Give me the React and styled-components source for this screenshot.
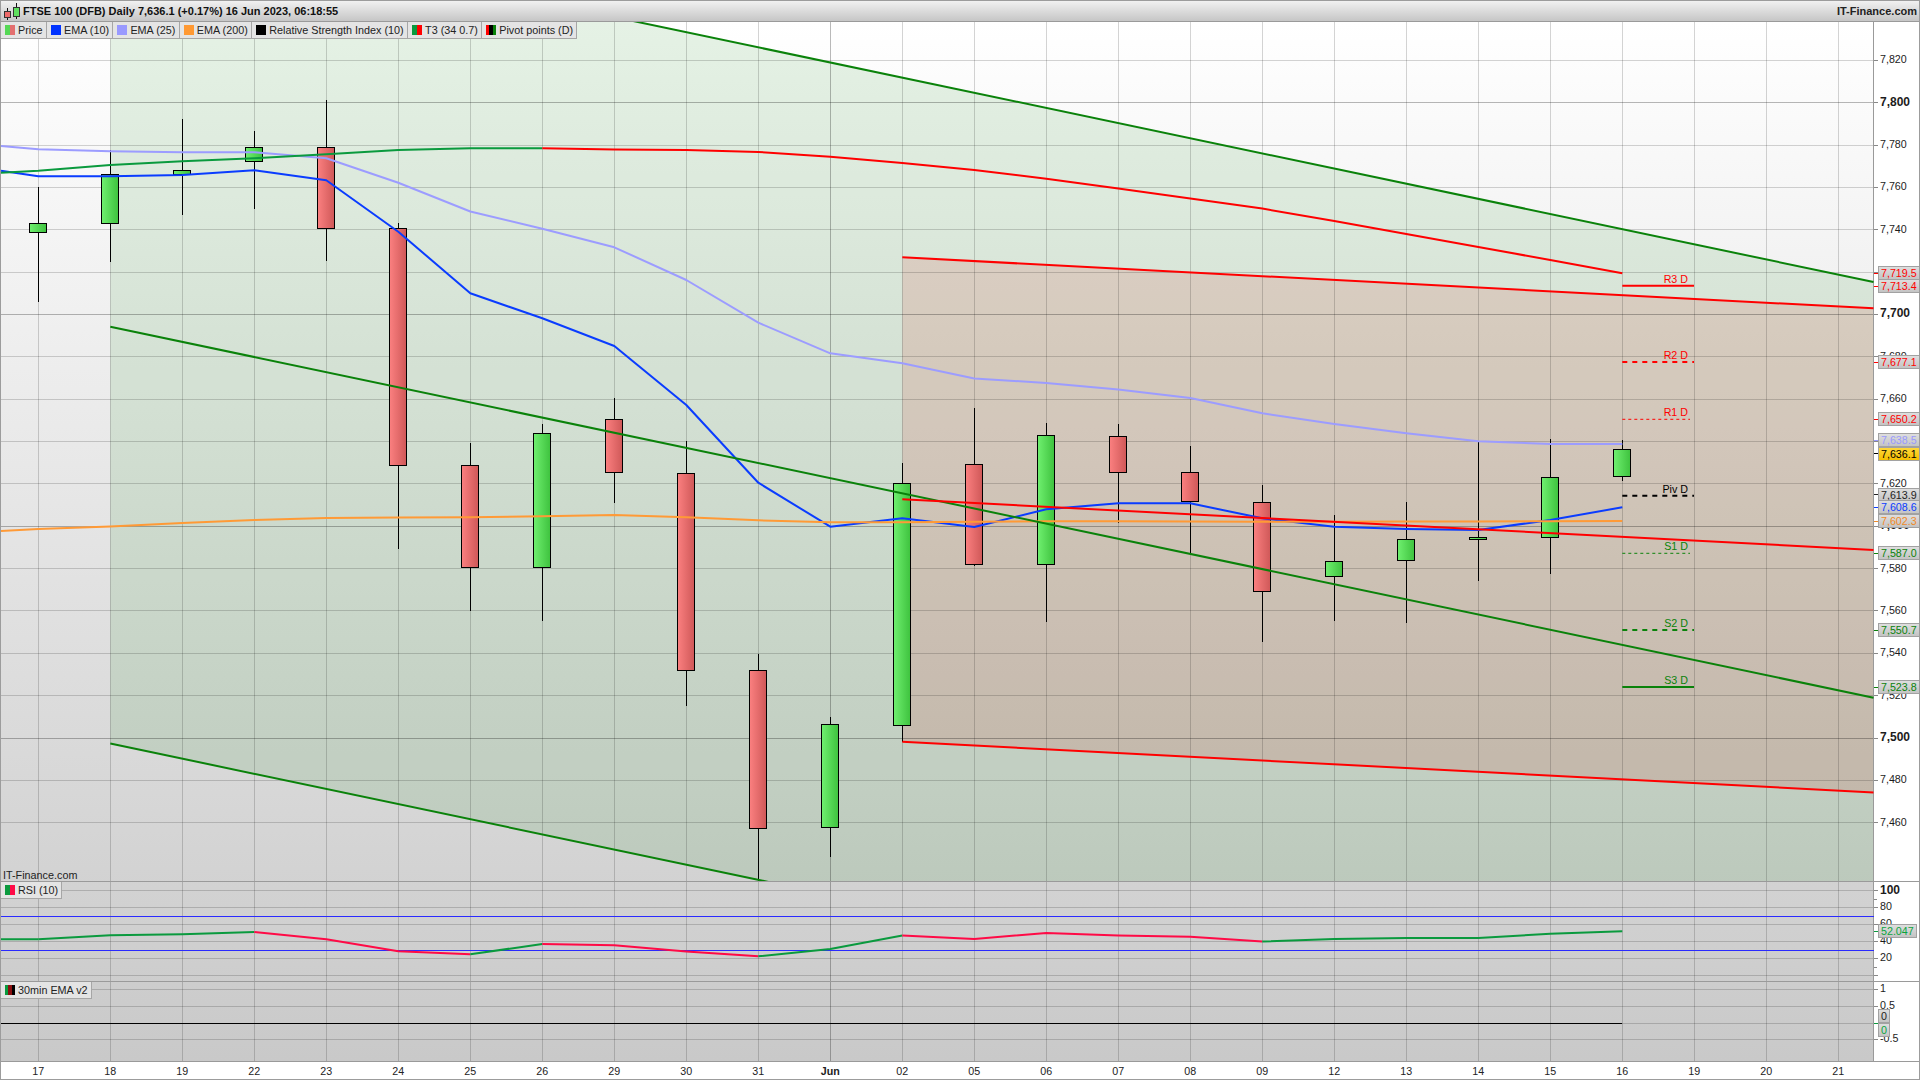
import React from 'react';
import styled, { createGlobalStyle } from 'styled-components';

const FONT = `'Liberation Sans', Arial, sans-serif`;
const PLOT_RIGHT = 1873.5;
const RIGHT_OF_DATA = 1622.3;

const GlobalStyle = createGlobalStyle`
  html, body {
    margin: 0;
    padding: 0;
    background: #fff;
    overflow: hidden;
  }
`;

const Frame = styled.div`
  position: relative;
  width: 1920px;
  height: 1080px;
  font-family: ${FONT};
  background: #fff;
  overflow: hidden;

  &::after {
    content: '';
    position: absolute;
    inset: 0;
    border: 1px solid #9c9c9c;
    pointer-events: none;
  }
`;

const TopBar = styled.header`
  height: 22px;
  box-sizing: border-box;
  border-bottom: 1px solid #9a9a9a;
  background: linear-gradient(#f3f3f3, #c6c6c6);
  display: flex;
  align-items: center;
  justify-content: space-between;
  padding: 1px 3px 0 3px;
`;

const Title = styled.div`
  display: flex;
  align-items: center;
  gap: 2px;
  font-size: 11px;
  font-weight: bold;
  color: #111;
`;

const Brand = styled.div`
  font-size: 11px;
  font-weight: bold;
  color: #222;
`;

const Stack = styled.main`
  position: relative;
  background: linear-gradient(#fff, #c9c9c9) 0 0 / 1873px 1039px no-repeat;
`;

const Legend = styled.div`
  position: absolute;
  top: 0;
  left: 1px;
  z-index: 3;
  display: flex;
  height: 17px;
  box-sizing: border-box;
  background: #e4e4e4;
  border-bottom: 1px solid #a6a6a6;
`;

const LegendItem = styled.div`
  display: flex;
  align-items: center;
  gap: 3px;
  padding: 0 3.4px 0 4px;
  border-right: 1px solid #a6a6a6;
  font-size: 10.8px;
  color: #222;
  white-space: nowrap;
`;

const Swatch = styled.i`
  display: block;
  width: 10px;
  height: 10px;
  background: ${({ $colors }) => {
    const step = 100 / $colors.length;
    const stops = $colors.map((c, i) => `${c} ${i * step}% ${(i + 1) * step}%`);
    return `linear-gradient(90deg, ${stops.join(', ')})`;
  }};
`;

const Panel = styled.section`
  position: relative;
  height: ${({ $height }) => $height}px;
  border-bottom: 1px solid #9a9a9a;
`;

const Plot = styled.svg`
  display: block;
  width: 1920px;
  height: ${({ $height }) => $height}px;
`;

const Watermark = styled.div`
  position: absolute;
  left: 3px;
  bottom: -1px;
  font-size: 10.8px;
  line-height: 13px;
  color: #222;
`;

const PaneLabel = styled.div`
  position: absolute;
  top: 0;
  left: 1px;
  height: 17px;
  box-sizing: border-box;
  display: flex;
  align-items: center;
  gap: 3px;
  padding: 0 3px 0 4px;
  background: #e4e4e4;
  border: solid #a6a6a6;
  border-width: 0 1px 1px 0;
  font-size: 10.8px;
  color: #222;
`;

const Tag = styled.div`
  position: absolute;
  left: 1878px;
  height: 14px;
  box-sizing: border-box;
  padding: 0 2px;
  border: 1px solid #a2a2a2;
  background: ${({ $highlight }) =>
    $highlight ? 'linear-gradient(#ffd83a, #f6bf00)' : 'linear-gradient(#dedede, #c4c4c4)'};
  color: ${({ $color }) => $color};
  font-size: 10.7px;
  line-height: 12px;
  white-space: nowrap;
`;

const AxisText = styled.text`
  font-family: ${FONT};
  font-size: ${({ $bold }) => ($bold ? '12px' : '10.7px')};
  font-weight: ${({ $bold }) => ($bold ? 'bold' : 'normal')};
  fill: #1c1c1c;
  dominant-baseline: central;
`;

const PivotText = styled.text`
  font-family: ${FONT};
  font-size: 10.7px;
  text-anchor: end;
  dominant-baseline: central;
  fill: ${({ $color }) => $color};
`;

const DateAxis = styled.footer`
  height: 17px;
  display: grid;
  grid-template-columns: repeat(26, 72px);
  padding-left: 2.3px;
  align-items: center;
`;

const DateLabel = styled.span`
  text-align: center;
  font-size: 10.7px;
  font-weight: ${({ $bold }) => ($bold ? 'bold' : 'normal')};
  color: #222;
`;

const DATES = ['17', '18', '19', '22', '23', '24', '25', '26', '29', '30', '31', 'Jun', '02', '05', '06', '07', '08', '09', '12', '13', '14', '15', '16', '19', '20', '21'];

const gridX = (i) => 38.3 + 72 * i;
const crisp = (v) => Math.floor(v) + 0.5;
const priceY = (p) => 60.3 + (7820 - p) * 2.118;

const PRICE_LEVELS = Array.from({ length: 20 }, (_, i) => 7840 - 20 * i);

// open/close edges and wick ends as read off the chart, in page pixels
const CANDLES = [
  ['up', 187, 223.3, 232.3, 301.7],
  ['up', 150.3, 174.7, 223.3, 261.7],
  ['up', 119, 170.3, 174.7, 214.7],
  ['up', 131, 147.3, 161.3, 208.7],
  ['down', 100, 147.3, 228.3, 260.7],
  ['down', 223, 228.3, 465.3, 548.6],
  ['down', 443, 465.3, 567.3, 610.7],
  ['up', 424, 433.3, 567.3, 620.7],
  ['down', 398, 419.3, 472.3, 502.7],
  ['down', 441, 473.3, 670.3, 705.7],
  ['down', 654, 670.3, 828.3, 881],
  ['up', 717, 724.3, 827.3, 856.7],
  ['up', 463, 483.3, 725.3, 741.7],
  ['down', 408, 464.3, 564.3, 565.7],
  ['up', 423, 435.3, 564.3, 621.7],
  ['down', 424, 436.3, 472.3, 522.7],
  ['down', 446, 472.3, 501.3, 553.3],
  ['down', 485, 502.3, 591.3, 641.7],
  ['up', 515, 561.3, 576.3, 620.7],
  ['up', 502, 539.3, 560.3, 622.7],
  ['up', 440.7, 537.3, 539.3, 580.7],
  ['up', 439, 477.3, 537.3, 573.7],
  ['up', 440, 449.3, 476.3, 480.7],
];

const EMA10 = [176.3, 176.3, 175, 170.3, 180.3, 231.7, 293.3, 318.3, 346, 405, 482.7, 526.7, 518.3, 527, 509.3, 503.3, 503.3, 518.3, 526.7, 529, 530, 520, 507.3];
const EMA25 = [149.3, 151.3, 152.3, 152.3, 158.3, 182.7, 211.5, 228.7, 247.3, 280, 322.7, 353.3, 363.3, 378.4, 383, 389.4, 398, 413.3, 424, 433.3, 441.3, 444, 444];
const EMA200 = [529, 526.5, 523, 520, 518, 517.5, 517.3, 516.3, 515, 517.3, 520.3, 522.3, 522.3, 521.7, 521.3, 521.3, 521.5, 521.7, 521.7, 521.5, 521.5, 521.2, 521];
const T3 = [170.7, 165, 161.3, 158.3, 154.3, 150, 148.3, 148.3, 149.4, 150, 152, 156.7, 163, 170, 178.8, 188.6, 198.4, 208.6, 221, 234, 247, 260, 273.3];
const RSI = [939.3, 935.3, 934.3, 932, 939.3, 951.3, 954.3, 944, 945.3, 951.4, 956.3, 949, 935.5, 939, 933, 935.5, 936.7, 941.6, 939, 938, 938, 933.7, 931.3];
const RSI_RUNS = [[0, 3, '#0a9a3e'], [3, 6, '#ff0a46'], [6, 7, '#0a9a3e'], [7, 10, '#ff0a46'], [10, 12, '#0a9a3e'], [12, 17, '#ff0a46'], [17, 22, '#0a9a3e']];

const toPoints = (values, first) => {
  const pts = values.map((y, i) => `${gridX(i)},${y}`);
  return first === undefined ? pts.join(' ') : `1,${first} ${pts.join(' ')}`;
};

const CHANNEL_LINES = [
  [110.3, -89, PLOT_RIGHT, 282, '#0a820a'],
  [110.3, 326.7, PLOT_RIGHT, 697.7, '#0a820a'],
  [110.3, 743.5, PLOT_RIGHT, 1114.5, '#0a820a'],
  [902.3, 257.3, PLOT_RIGHT, 308.3, '#ff0000'],
  [902.3, 499.3, PLOT_RIGHT, 550, '#ff0000'],
  [902.3, 741.7, PLOT_RIGHT, 792.5, '#ff0000'],
];

const PIVOTS = [
  { name: 'R3 D', y: 285.7, color: '#ff0000', width: 2, end: 1694 },
  { name: 'R2 D', y: 362, color: '#ff0000', width: 2, dash: '5 5', end: 1694 },
  { name: 'R1 D', y: 419.3, color: '#ff0000', width: 1, dash: '3 3', end: 1690 },
  { name: 'Piv D', y: 495.7, color: '#000000', width: 2, dash: '5 5', end: 1694 },
  { name: 'S1 D', y: 553.3, color: '#0a820a', width: 1, dash: '3 3', end: 1690 },
  { name: 'S2 D', y: 630, color: '#0a820a', width: 2, dash: '5 5', end: 1694 },
  { name: 'S3 D', y: 687, color: '#0a820a', width: 2, end: 1694 },
];

const MAIN_TAGS = [
  ['7,719.5', 273, '#ff0000'],
  ['7,713.4', 286, '#ff0000'],
  ['7,677.1', 362.3, '#ff0000'],
  ['7,650.2', 419.3, '#ff0000'],
  ['7,638.5', 440, '#9999ff'],
  ['7,636.1', 453.7, '#000000', true],
  ['7,613.9', 494.7, '#222222'],
  ['7,608.6', 507.3, '#0a3cff'],
  ['7,602.3', 521.3, '#f08a28'],
  ['7,587.0', 553.3, '#0a820a'],
  ['7,550.7', 630, '#0a820a'],
  ['7,523.8', 687, '#0a820a'],
];

const LEGEND = [
  ['Price', ['#55d855', '#e36f6f']],
  ['EMA (10)', ['#0033ff']],
  ['EMA (25)', ['#9999ff']],
  ['EMA (200)', ['#ff9933']],
  ['Relative Strength Index (10)', ['#000000']],
  ['T3 (34 0.7)', ['#0a9a3e', '#ff0000']],
  ['Pivot points (D)', ['#ff0000', '#000000', '#0a820a']],
];

const CandleLogo = () => (
  <svg width="18" height="18" viewBox="0 0 18 18">
    <path d="M4.5 6v12M13.5 1v16" stroke="#111" />
    <rect x="1.5" y="9.5" width="6" height="6" fill="#ee6a6a" stroke="#333" />
    <rect x="10.5" y="5.5" width="6" height="9" fill="#5fe05f" stroke="#333" />
  </svg>
);

const VerticalGrid = ({ top, bottom }) => (
  <g shapeRendering="crispEdges">
    {DATES.map((d, i) => (
      <line
        key={i}
        x1={crisp(gridX(i))}
        x2={crisp(gridX(i))}
        y1={top}
        y2={bottom}
        stroke={d === 'Jun' ? 'rgba(0,0,0,0.27)' : 'rgba(0,0,0,0.17)'}
      />
    ))}
  </g>
);

const HorizontalGrid = ({ levels }) => (
  <g shapeRendering="crispEdges">
    {levels.map(([y, strong]) => (
      <g key={y}>
        <line x1="0" x2={PLOT_RIGHT} y1={crisp(y)} y2={crisp(y)} stroke={strong ? 'rgba(0,0,0,0.28)' : 'rgba(0,0,0,0.17)'} />
        <line x1="1874" x2="1878" y1={crisp(y)} y2={crisp(y)} stroke="#888" />
      </g>
    ))}
  </g>
);

const AxisLine = ({ top, bottom }) => (
  <line x1={PLOT_RIGHT} x2={PLOT_RIGHT} y1={top} y2={bottom} stroke="#9a9a9a" shapeRendering="crispEdges" />
);

const Candle = ({ index, dir, hi, bodyTop, bodyBottom, lo }) => {
  const cx = crisp(gridX(index));
  const top = crisp(bodyTop);
  return (
    <g shapeRendering="crispEdges">
      <line x1={cx} x2={cx} y1={hi} y2={lo} stroke="#000" />
      <rect
        x={cx - 9}
        y={top}
        width="17"
        height={Math.max(1, Math.round(bodyBottom - bodyTop))}
        fill={dir === 'up' ? 'url(#candleUp)' : 'url(#candleDown)'}
        stroke="#000"
      />
    </g>
  );
};

const Series = ({ points, color, width = 2 }) => (
  <polyline points={points} fill="none" stroke={color} strokeWidth={width} strokeLinejoin="round" />
);

const MainPlot = () => (
  <Plot $height={859} viewBox="0 22 1920 859">
    <defs>
      <linearGradient id="candleUp" x1="0" x2="1" y1="0" y2="0">
        <stop offset="0" stopColor="#70f070" />
        <stop offset="1" stopColor="#3ec23e" />
      </linearGradient>
      <linearGradient id="candleDown" x1="0" x2="1" y1="0" y2="0">
        <stop offset="0" stopColor="#fb8080" />
        <stop offset="1" stopColor="#cf5858" />
      </linearGradient>
    </defs>

    <polygon points={`110.3,-89 ${PLOT_RIGHT},282 ${PLOT_RIGHT},1114.5 110.3,743.5`} fill="rgba(0,128,0,0.1)" />
    <polygon points={`902.3,257.3 ${PLOT_RIGHT},308.3 ${PLOT_RIGHT},792.5 902.3,741.7`} fill="rgba(220,6,2,0.11)" />

    <VerticalGrid top={22} bottom={881} />
    <HorizontalGrid levels={PRICE_LEVELS.slice(1).map((p) => [priceY(p), p % 100 === 0])} />
    <AxisLine top={22} bottom={881} />

    {PRICE_LEVELS.slice(1).map((p) => (
      <AxisText key={p} x="1880" y={priceY(p) - 1} $bold={p % 100 === 0}>
        {`${Math.floor(p / 1000)},${String(p % 1000).padStart(3, '0')}`}
      </AxisText>
    ))}

    {CANDLES.map(([dir, hi, bodyTop, bodyBottom, lo], i) => (
      <Candle key={i} index={i} dir={dir} hi={hi} bodyTop={bodyTop} bodyBottom={bodyBottom} lo={lo} />
    ))}

    <Series points={toPoints(EMA10, 170.7)} color="#0a3cff" />
    <Series points={toPoints(EMA25, 146)} color="#9c9cff" />
    <Series points={toPoints(EMA200, 531)} color="#ff9a36" />
    <Series points={`1,172.7 ${T3.slice(0, 8).map((y, i) => `${gridX(i)},${y}`).join(' ')}`} color="#0a9a3e" />
    <Series points={T3.slice(7).map((y, i) => `${gridX(i + 7)},${y}`).join(' ')} color="#ff0000" />

    {CHANNEL_LINES.map(([x1, y1, x2, y2, color], i) => (
      <line key={i} x1={x1} y1={y1} x2={x2} y2={y2} stroke={color} strokeWidth="2" />
    ))}

    {PIVOTS.map(({ name, y, color, width, dash, end }) => (
      <g key={name}>
        <line x1={RIGHT_OF_DATA} x2={end} y1={y} y2={y} stroke={color} strokeWidth={width} strokeDasharray={dash} />
        <PivotText x="1688" y={y - 7} $color={color}>{name}</PivotText>
      </g>
    ))}

    {MAIN_TAGS.map(([label, y, color]) => (
      <line key={label} x1="1874" x2="1878" y1={crisp(y)} y2={crisp(y)} stroke={color} shapeRendering="crispEdges" />
    ))}
  </Plot>
);

const RSI_LEVELS = [[890, false], [907, false], [924, false], [941, false], [958, false], [975, false]];

const RsiPlot = () => (
  <Plot $height={99} viewBox="0 882 1920 99">
    <VerticalGrid top={882} bottom={981} />
    <HorizontalGrid levels={RSI_LEVELS} />
    <AxisLine top={882} bottom={981} />
    <path d="M1874 899.5h3M1874 967.5h3" stroke="#888" shapeRendering="crispEdges" />

    <AxisText x="1880" y="889.7" $bold>100</AxisText>
    <AxisText x="1880" y="906">80</AxisText>
    <AxisText x="1880" y="923">60</AxisText>
    <AxisText x="1880" y="940">40</AxisText>
    <AxisText x="1880" y="957">20</AxisText>

    <g shapeRendering="crispEdges">
      <line x1="0" x2={PLOT_RIGHT} y1="916.5" y2="916.5" stroke="#2a2aff" />
      <line x1="0" x2={PLOT_RIGHT} y1="950.5" y2="950.5" stroke="#2a2aff" />
    </g>

    <Series points={`1,939.3 ${gridX(0)},939.3`} color="#0a9a3e" />
    {RSI_RUNS.map(([from, to, color]) => (
      <Series
        key={from}
        color={color}
        points={RSI.slice(from, to + 1).map((y, i) => `${gridX(from + i)},${y}`).join(' ')}
      />
    ))}
    <line x1="1874" x2="1878" y1="931.5" y2="931.5" stroke="#0a9a3e" shapeRendering="crispEdges" />
  </Plot>
);

const EMA_LEVELS = [[989, false], [1006, false], [1023, false], [1039, false]];

const EmaPlot = () => (
  <Plot $height={79} viewBox="0 982 1920 79">
    <VerticalGrid top={982} bottom={1061} />
    <HorizontalGrid levels={EMA_LEVELS} />
    <AxisLine top={982} bottom={1061} />

    <AxisText x="1880" y="988">1</AxisText>
    <AxisText x="1880" y="1005">0.5</AxisText>
    <AxisText x="1880" y="1038">-0.5</AxisText>

    <line x1="0" x2={RIGHT_OF_DATA} y1="1023.5" y2="1023.5" stroke="#000" shapeRendering="crispEdges" />
    <line x1="1874" x2="1878" y1="1023.5" y2="1023.5" stroke="#0a9a3e" shapeRendering="crispEdges" />
  </Plot>
);

const App = () => (
  <Frame>
    <GlobalStyle />
    <TopBar>
      <Title>
        <CandleLogo />
        FTSE 100 (DFB) Daily 7,636.1 (+0.17%) 16 Jun 2023, 06:18:55
      </Title>
      <Brand>IT-Finance.com</Brand>
    </TopBar>

    <Stack>
      <Panel $height={859}>
        <Legend>
          {LEGEND.map(([label, colors]) => (
            <LegendItem key={label}>
              <Swatch $colors={colors} />
              {label}
            </LegendItem>
          ))}
        </Legend>
        <MainPlot />
        <Watermark>IT-Finance.com</Watermark>
        {MAIN_TAGS.map(([label, y, color, highlight]) => (
          <Tag key={label} $color={color} $highlight={highlight} style={{ top: y - 22 - 7 }}>
            {label}
          </Tag>
        ))}
      </Panel>

      <Panel $height={99}>
        <RsiPlot />
        <PaneLabel>
          <Swatch $colors={['#0a9a3e', '#ff0a46']} />
          RSI (10)
        </PaneLabel>
        <Tag $color="#0aa53e" style={{ top: 931.3 - 882 - 7 }}>52.047</Tag>
      </Panel>

      <Panel $height={79}>
        <EmaPlot />
        <PaneLabel>
          <Swatch $colors={['#0a9a3e', '#8a1010', '#000000']} />
          30min EMA v2
        </PaneLabel>
        <Tag $color="#222222" style={{ top: 1016 - 982 - 7 }}>0</Tag>
        <Tag $color="#0aa53e" style={{ top: 1030 - 982 - 7 }}>0</Tag>
      </Panel>

      <DateAxis>
        {DATES.map((d, i) => (
          <DateLabel key={i} $bold={d === 'Jun'}>{d}</DateLabel>
        ))}
      </DateAxis>
    </Stack>
  </Frame>
);

export default App;
